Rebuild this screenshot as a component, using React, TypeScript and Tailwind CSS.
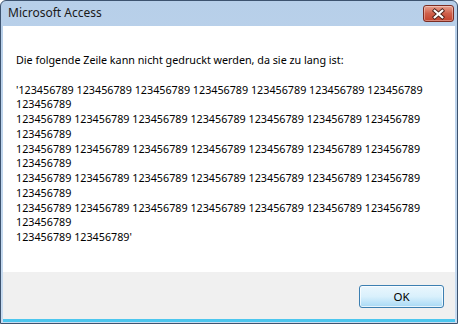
const group = "123456789";
const seven = Array(7).fill(group).join(" ");

const lines = [
  "'" + seven,
  group,
  seven,
  group,
  seven,
  group,
  seven,
  group,
  seven,
  group,
  group + " " + group + "'",
];

const CloseGlyph = () => (
  <svg width="31" height="16" viewBox="0 0 31 16">
    <path d="M11.5 4.5 L19.5 11.5 M19.5 4.5 L11.5 11.5" stroke="#4a2018" strokeWidth="4.2" strokeLinecap="square" fill="none" />
    <path d="M11.5 4.5 L19.5 11.5 M19.5 4.5 L11.5 11.5" stroke="#ffffff" strokeWidth="2.4" strokeLinecap="square" fill="none" />
  </svg>
);

const App = () => {
  return (
    <div className="w-[458px] h-[324px] bg-white">
      <div className="w-[458px] h-[324px] flex flex-col rounded-t-[6px] border border-[#3d536f] bg-gradient-to-b from-[#b7cfe9] to-[#c8dcf1] font-['Noto_Sans',sans-serif] text-black">
        {/* title bar */}
        <div className="h-[25px] flex items-start justify-between pl-[7px] pr-[3px]">
          <span className="text-[12px] leading-none pt-[6px] text-[#1a1a1a]">Microsoft Access</span>
          <button className="mt-[4px] w-[31px] h-[17px] rounded-[3px] border border-[#7b2c22] bg-gradient-to-b from-[#e7a08e] via-[#cf5f4a] to-[#c3412b] shadow-[inset_0_0_0_1px_rgba(255,255,255,0.35)] flex items-center justify-center">
            <CloseGlyph />
          </button>
        </div>

        {/* client */}
        <div className="flex-1 mx-[2px] mb-[1px] flex flex-col border-b-[3px] border-[#4cc6ee]">
          <div className="flex-1 bg-white pl-[13px] pt-[27px] text-[10.75px] leading-[14.75px] text-black">
            <div>Die folgende Zeile kann nicht gedruckt werden, da sie zu lang ist:</div>
            <div>&nbsp;</div>
            {lines.map((l, i) => (
              <div key={i} className="whitespace-pre">{l}</div>
            ))}
          </div>
          <div className="h-[47px] bg-[#f0f0f0] flex items-start justify-end pr-[11px] pt-[13px]">
            <button className="w-[85px] h-[23px] rounded-[3px] border border-[#3c7fb1] bg-gradient-to-b from-[#eaf6fd] via-[#d9f0fc] to-[#a7d9f5] shadow-[inset_0_0_0_1px_rgba(255,255,255,0.7)] text-[11.5px] leading-none text-black">
              OK
            </button>
          </div>
        </div>
      </div>
    </div>
  );
};

export default App;
